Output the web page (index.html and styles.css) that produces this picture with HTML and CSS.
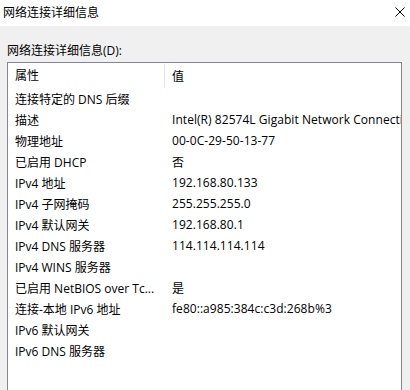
FILE: index.html
```html
<!DOCTYPE html>
<html lang="zh-CN">
<head>
    <meta charset="UTF-8">
    <title>网络连接详细信息</title>
    <link rel="stylesheet" href="styles.css">
</head>
<body>
    <div class="titlebar">
        <span class="title">网络连接详细信息</span>
        <svg class="close" width="10" height="10" viewBox="0 0 10 10">
            <path d="M0.5 0.5 L9.5 9.5 M9.5 0.5 L0.5 9.5" stroke="#000" stroke-width="1" fill="none"/>
        </svg>
    </div>

    <div class="content">
        <div class="label">网络连接详细信息(D):</div>
        <div class="listview">
            <div class="row header">
                <div class="cell name">属性</div>
                <div class="cell value">值</div>
            </div>
            <div class="row"><div class="cell name">连接特定的 DNS 后缀</div><div class="cell value"></div></div>
            <div class="row"><div class="cell name">描述</div><div class="cell value">Intel(R) 82574L Gigabit Network Connection</div></div>
            <div class="row"><div class="cell name">物理地址</div><div class="cell value">00-0C-29-50-13-77</div></div>
            <div class="row"><div class="cell name">已启用 DHCP</div><div class="cell value">否</div></div>
            <div class="row"><div class="cell name">IPv4 地址</div><div class="cell value">192.168.80.133</div></div>
            <div class="row"><div class="cell name">IPv4 子网掩码</div><div class="cell value">255.255.255.0</div></div>
            <div class="row"><div class="cell name">IPv4 默认网关</div><div class="cell value">192.168.80.1</div></div>
            <div class="row"><div class="cell name">IPv4 DNS 服务器</div><div class="cell value">114.114.114.114</div></div>
            <div class="row"><div class="cell name">IPv4 WINS 服务器</div><div class="cell value"></div></div>
            <div class="row"><div class="cell name">已启用 NetBIOS over Tc...</div><div class="cell value">是</div></div>
            <div class="row"><div class="cell name">连接-本地 IPv6 地址</div><div class="cell value">fe80::a985:384c:c3d:268b%3</div></div>
            <div class="row"><div class="cell name">IPv6 默认网关</div><div class="cell value"></div></div>
            <div class="row"><div class="cell name">IPv6 DNS 服务器</div><div class="cell value"></div></div>
        </div>
    </div>
</body>
</html>
```

FILE: styles.css
```css
* {
    margin: 0;
    padding: 0;
    box-sizing: border-box;
}

body {
    font-family: "Open Sans", "Noto Sans CJK SC", sans-serif;
    font-size: 12px;
    color: #000;
    background: #f0f0f0;
    width: 410px;
    height: 390px;
    overflow: hidden;
}

.titlebar {
    height: 26px;
    background: #fff;
    display: flex;
    align-items: center;
    justify-content: space-between;
    padding: 0 5px 2px 3px;
}

.content {
    padding: 16px 8px 0 7px;
}

.label {
    height: 20px;
    line-height: 18px;
}

.listview {
    background: #fff;
    border: 1px solid #828790;
    height: 340px;
    overflow: hidden;
    padding-top: 1px;
}

.row {
    display: flex;
    height: 21px;
    align-items: center;
    white-space: nowrap;
}

.row.header {
    height: 24px;
}

.cell.name {
    width: 157px;
    flex-shrink: 0;
    padding-left: 7px;
    overflow: hidden;
}

.cell.value {
    padding-left: 7px;
    letter-spacing: 0.05px;
}

.header .cell.name {
    border-right: 1px solid #e5e5e5;
    height: 24px;
    line-height: 24px;
}
```
